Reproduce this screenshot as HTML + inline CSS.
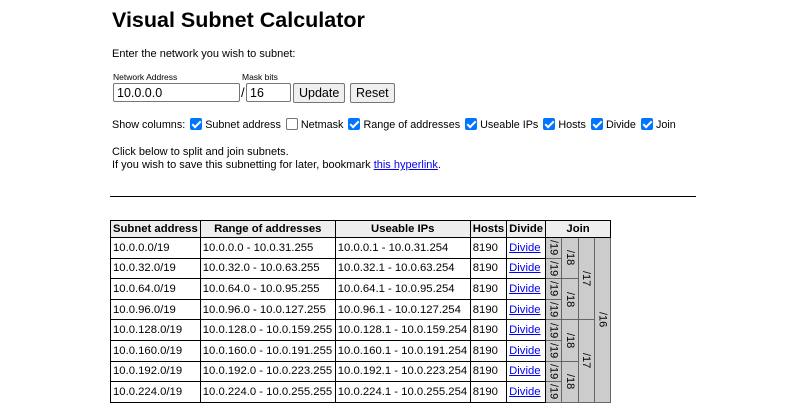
<!DOCTYPE html>
<html><head><style>
body{margin:0;font-family:"Liberation Sans",Arial,sans-serif;font-size:11px;color:#000;background:#fff;position:relative;width:800px;height:420px;overflow:hidden}
.a{position:absolute}
h1{position:absolute;left:112px;top:8px;margin:0;font-size:21.5px;font-weight:bold}
input[type=text]{font:12.5px "Liberation Sans",sans-serif;border:1px solid #767676;border-radius:2px;padding:0 3px;box-sizing:border-box}
button{font:12.5px "Liberation Sans",sans-serif;background:#efefef;border:1px solid #767676;border-radius:2px;height:20px;padding:0 5px}
.cb{display:inline-block;width:12px;height:12px;border-radius:2px;background:#0075ff;vertical-align:-2px;margin:0 3px 0 2px;position:relative}
.cb:after{content:"";position:absolute;left:4px;top:1px;width:3px;height:7px;border:solid #fff;border-width:0 2px 2px 0;transform:rotate(45deg)}
.cb.off{background:#fff;border:1px solid #767676;width:10px;height:10px}
.cb.off:after{display:none}
table{position:absolute;left:110px;top:220px;border-collapse:collapse;font-size:11.3px}
td,th{border:1px solid #000;padding:0 2px;height:19.6px;white-space:nowrap}
th{background:#eee;height:16px}
a{color:#00e;text-decoration:underline}
.j{background:#ccc;writing-mode:vertical-lr;text-align:center;padding:0;font-size:11px;border-color:#666}
</style></head><body>
<h1>Visual Subnet Calculator</h1>
<div class="a" style="left:112px;top:48px">Enter the network you wish to subnet:</div>
<div class="a" style="left:113px;top:72px;font-size:8.5px">Network Address</div>
<div class="a" style="left:242px;top:72px;font-size:8.5px">Mask bits</div>
<input class="a" type="text" value="10.0.0.0" style="left:113px;top:83px;width:127px;height:19px">
<div class="a" style="left:241px;top:85px;font-size:13px">/</div>
<input class="a" type="text" value="16" style="left:246px;top:83px;width:45px;height:19px">
<button class="a" style="left:293px;top:83px">Update</button>
<button class="a" style="left:350px;top:83px">Reset</button>
<div class="a" style="left:112px;top:118px;font-size:10.8px">Show columns: <span class="cb"></span>Subnet address <span class="cb off"></span>Netmask <span class="cb"></span>Range of addresses <span class="cb"></span>Useable IPs <span class="cb"></span>Hosts <span class="cb"></span>Divide <span class="cb"></span>Join</div>
<div class="a" style="left:112px;top:146px;line-height:13px">Click below to split and join subnets.<br>If you wish to save this subnetting for later, bookmark <a>this hyperlink</a>.</div>
<div class="a" style="left:110px;top:196px;width:586px;height:1px;background:#000"></div>
<table>
<tr><th style="width:84px">Subnet address</th><th style="width:130px">Range of addresses</th><th style="width:130px">Useable IPs</th><th style="width:30px">Hosts</th><th style="width:33px">Divide</th><th colspan="4" style="width:60px">Join</th></tr>
<tr><td>10.0.0.0/19</td><td>10.0.0.0 - 10.0.31.255</td><td>10.0.0.1 - 10.0.31.254</td><td>8190</td><td><a>Divide</a></td><td class="j">/19</td><td class="j" rowspan="2">/18</td><td class="j" rowspan="4">/17</td><td class="j" rowspan="8">/16</td></tr>
<tr><td>10.0.32.0/19</td><td>10.0.32.0 - 10.0.63.255</td><td>10.0.32.1 - 10.0.63.254</td><td>8190</td><td><a>Divide</a></td><td class="j">/19</td></tr>
<tr><td>10.0.64.0/19</td><td>10.0.64.0 - 10.0.95.255</td><td>10.0.64.1 - 10.0.95.254</td><td>8190</td><td><a>Divide</a></td><td class="j">/19</td><td class="j" rowspan="2">/18</td></tr>
<tr><td>10.0.96.0/19</td><td>10.0.96.0 - 10.0.127.255</td><td>10.0.96.1 - 10.0.127.254</td><td>8190</td><td><a>Divide</a></td><td class="j">/19</td></tr>
<tr><td>10.0.128.0/19</td><td>10.0.128.0 - 10.0.159.255</td><td>10.0.128.1 - 10.0.159.254</td><td>8190</td><td><a>Divide</a></td><td class="j">/19</td><td class="j" rowspan="2">/18</td><td class="j" rowspan="4">/17</td></tr>
<tr><td>10.0.160.0/19</td><td>10.0.160.0 - 10.0.191.255</td><td>10.0.160.1 - 10.0.191.254</td><td>8190</td><td><a>Divide</a></td><td class="j">/19</td></tr>
<tr><td>10.0.192.0/19</td><td>10.0.192.0 - 10.0.223.255</td><td>10.0.192.1 - 10.0.223.254</td><td>8190</td><td><a>Divide</a></td><td class="j">/19</td><td class="j" rowspan="2">/18</td></tr>
<tr><td>10.0.224.0/19</td><td>10.0.224.0 - 10.0.255.255</td><td>10.0.224.1 - 10.0.255.254</td><td>8190</td><td><a>Divide</a></td><td class="j">/19</td></tr>
</table>
</body></html>
